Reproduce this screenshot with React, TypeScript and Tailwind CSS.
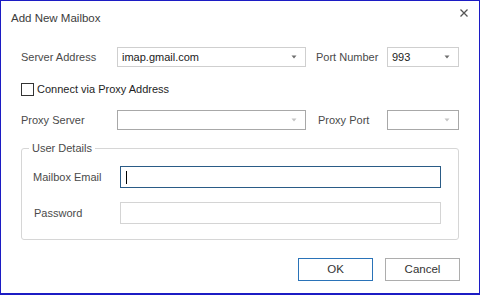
import { ReactNode } from 'react'

function Caret({ disabled }: { disabled?: boolean }) {
  return (
    <svg width="6" height="4" viewBox="0 0 6 4" className="shrink-0">
      <path d="M0.5 0.5 L5.5 0.5 L3 3.5 Z" fill={disabled ? '#c4c4c4' : '#6e6e6e'} />
    </svg>
  )
}

function Combo({
  value,
  width,
  disabled,
}: {
  value?: string
  width: string
  disabled?: boolean
}) {
  return (
    <div
      className={`${width} h-[20px] flex items-center justify-between bg-white border pl-[4px] pr-[8px] ${
        disabled ? 'border-[#a8a8a8]' : 'border-[#cfcfcf]'
      }`}
    >
      <span className="text-[#222] leading-none">{value}</span>
      <Caret disabled={disabled} />
    </div>
  )
}

function Label({ children, width }: { children: ReactNode; width: string }) {
  return <span className={`${width} text-[#4a4a4a] leading-none`}>{children}</span>
}

export default function App() {
  return (
    <div
      className="w-[480px] h-[295px] bg-white border-l border-t border-r border-b-2 border-[#1c1cc4] flex flex-col text-[11px] select-none"
      style={{ fontFamily: '"Liberation Sans", Arial, sans-serif' }}
    >
      {/* title bar */}
      <div className="h-[36px] flex justify-between">
        <span className="self-center pl-[10px] text-[11.5px] text-[#3c3c3c]">Add New Mailbox</span>
        <svg width="8" height="8" viewBox="0 0 8 8" className="mt-[8px] mr-[11px]">
          <path d="M0.5 0.5 L7.5 7.5 M7.5 0.5 L0.5 7.5" stroke="#555" strokeWidth="1.3" />
        </svg>
      </div>

      {/* server row */}
      <div className="mt-[10px] pl-[20px] flex items-center">
        <Label width="w-[96px]">Server Address</Label>
        <Combo value="imap.gmail.com" width="w-[189px]" />
        <span className="ml-[10px] w-[71px] text-[#4a4a4a] leading-none">Port Number</span>
        <Combo value="993" width="w-[72px]" />
      </div>

      {/* proxy checkbox */}
      <div className="mt-[16px] pl-[20px] flex items-center">
        <div className="w-[13px] h-[13px] border border-[#333] bg-white" />
        <span className="ml-[3px] text-[#1e1e1e] leading-none">Connect via Proxy Address</span>
      </div>

      {/* proxy row */}
      <div className="mt-[14px] pl-[20px] flex items-center">
        <Label width="w-[96px]">Proxy Server</Label>
        <Combo width="w-[189px]" disabled />
        <span className="ml-[12px] w-[69px] text-[#4a4a4a] leading-none">Proxy Port</span>
        <Combo width="w-[72px]" disabled />
      </div>

      {/* user details group */}
      <div className="mt-[18px] mx-[20px] w-[438px] relative border border-[#d6d6d6] rounded-[3px] pt-[17px] pb-[15px] pl-[11px]">
        <span className="absolute -top-[6px] left-[7px] px-[3px] bg-white text-[#4a4a4a] leading-none">
          User Details
        </span>
        <div className="flex items-center">
          <Label width="w-[87px]">Mailbox Email</Label>
          <div className="w-[321px] h-[22px] border border-[#2a5b86] bg-white flex items-center pl-[5px]">
            <div className="w-px h-[13px] bg-black" />
          </div>
        </div>
        <div className="mt-[14px] flex items-center">
          <span className="w-[87px] pl-[1px] text-[#4a4a4a] leading-none">Password</span>
          <div className="w-[321px] h-[22px] border border-[#d4d4d4] bg-white" />
        </div>
      </div>

      {/* buttons */}
      <div className="mt-[18px] pr-[19px] flex justify-end gap-[12px]">
        <button className="w-[75px] h-[23px] border border-[#2a73b8] bg-white text-[#333] text-[11.5px] leading-none">
          OK
        </button>
        <button className="w-[75px] h-[23px] border border-[#adadad] bg-white text-[#333] text-[11.5px] leading-none">
          Cancel
        </button>
      </div>
    </div>
  )
}
